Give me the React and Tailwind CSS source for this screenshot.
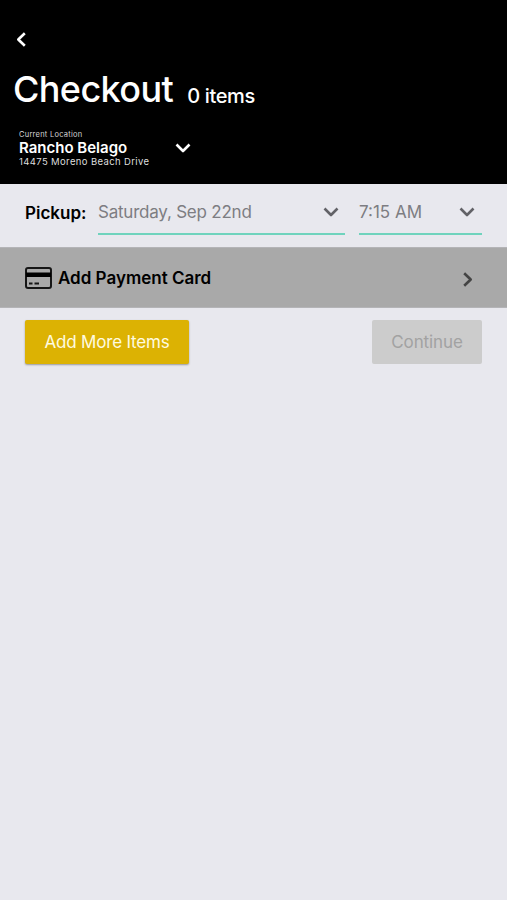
import React, { useState } from "react";

const Chevron = ({ d, box, className }) => (
  <svg
    viewBox={box}
    className={className}
    fill="none"
    stroke="currentColor"
    strokeWidth="2.6"
    strokeLinejoin="round"
  >
    <path d={d} />
  </svg>
);

const ChevronDown = ({ className }) => (
  <Chevron box="0 0 16 10" d="M1.5 1.5 8 8 14.5 1.5" className={className} />
);

const CardIcon = () => (
  <svg viewBox="0 0 27 22" className="h-[22px] w-[27px]" fill="none">
    <rect x="1" y="1" width="25" height="20" rx="2" stroke="#161616" strokeWidth="2" />
    <path d="M1 5.5h25v4.5H1z" fill="#000" />
    <path d="M4 16.5h3.5M9.5 16.5h4.5" stroke="#161616" strokeWidth="2" />
  </svg>
);

const PickupSelect = ({ value, className }) => (
  <button
    className={`flex h-[46px] items-start justify-between border-b-2 border-[#6fd3bd] text-[#7d7d82] ${className}`}
  >
    <span className="mt-[11px] text-[17px] leading-6 whitespace-nowrap">{value}</span>
    <ChevronDown className="mt-[18px] h-[10px] w-4 text-[#626267]" />
  </button>
);

const App = () => {
  const [items] = useState([]);

  return (
    <div className="min-h-screen w-full bg-[#e8e8ee] font-['Inter',sans-serif] text-black">
      {/* ===== HEADER ===== */}
      <header className="h-[184px] bg-black pt-8 text-white">
        <button className="ml-4 block">
          <Chevron
            box="0 0 10 15"
            d="M8.8 1.2 2.3 7.5 8.8 13.8"
            className="h-[15px] w-[10px]"
          />
        </button>

        <div className="mt-[20px] ml-[13px] flex items-end">
          <h1 className="text-[36px] leading-[44px] font-medium tracking-[-0.6px]">Checkout</h1>
          <span className="ml-[14px] text-[20px] leading-[30px] font-medium tracking-[-0.35px]">
            {items.length} items
          </span>
        </div>

        <div className="mt-[19px] ml-[19px] flex items-start">
          <div className="w-[156px] pt-px whitespace-nowrap">
            <p className="text-[7.5px] leading-[8px] tracking-[0.25px] text-[#d5d5d5]">
              Current Location
            </p>
            <p className="text-[15px] leading-[18px] font-semibold">Rancho Belago</p>
            <p className="text-[9.5px] leading-[10px] tracking-[0.37px] text-[#dedede]">
              14475 Moreno Beach Drive
            </p>
          </div>
          <ChevronDown className="mt-[13px] h-[10px] w-4" />
        </div>
      </header>

      {/* ===== PICKUP ===== */}
      <section className="flex h-[63px] pt-[5px] pr-[25px] pl-[25px]">
        <span className="mt-[12px] w-[73px] text-[17px] leading-6 font-semibold">Pickup:</span>
        <PickupSelect value="Saturday, Sep 22nd" className="w-[247px] pr-[6px] tracking-[-0.22px]" />
        <PickupSelect value="7:15 AM" className="ml-[14px] w-[123px] pr-[7px]" />
      </section>

      {/* ===== PAYMENT ===== */}
      <button className="flex h-[61px] w-full items-center border-y border-[#b4b4b7] bg-[#a9a9a9] pr-[34px] pl-[25px]">
        <CardIcon />
        <span className="ml-[6px] text-[17px] leading-6 font-semibold">Add Payment Card</span>
        <Chevron
          box="0 0 10 15"
          d="M1.2 1.2 7.7 7.5 1.2 13.8"
          className="mt-[3px] ml-auto h-[15px] w-[10px] text-[#444]"
        />
      </button>

      {/* ===== ACTIONS ===== */}
      <div className="flex items-start justify-between px-[25px] pt-3">
        <button className="h-11 w-[164px] rounded-[2px] bg-[#dcb203] pt-px text-[17px] tracking-[-0.2px] text-[#fffbe0] shadow-[0_1px_2px_rgba(0,0,0,0.35)]">
          Add More Items
        </button>
        <button
          disabled={items.length === 0}
          className="h-11 w-[110px] rounded-[2px] bg-[#cccccc] pt-px text-[17px] tracking-[-0.1px] text-[#a2a2a2]"
        >
          Continue
        </button>
      </div>
    </div>
  );
};

export default App;
